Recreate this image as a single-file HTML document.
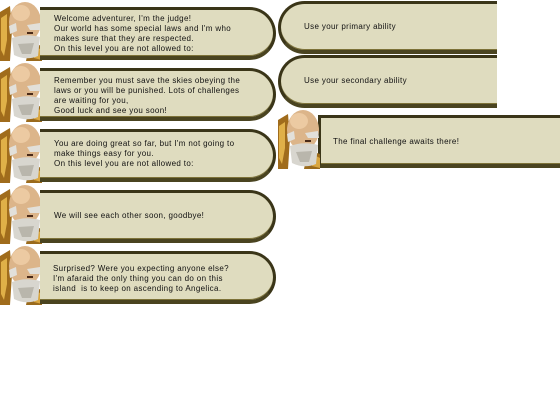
<!DOCTYPE html>
<html><head><meta charset="utf-8"><style>
body{margin:0;width:560px;height:400px;background:#fff;position:relative;overflow:hidden;font-family:"Liberation Sans",sans-serif}
.b{position:absolute;box-sizing:border-box;background:#dfdcbf;border:3px solid #3a3518;border-bottom:4px solid #4a4420;box-shadow:inset 0 -1px 0 #7d7238;color:#111;font-size:8px;line-height:10px;letter-spacing:0.35px}
.l{border-left:none;border-radius:0 27px 27px 0}
.r{border-right:none;border-radius:27px 0 0 27px}
.t{position:absolute}
svg.p{position:absolute;width:42px;height:61px}
</style></head><body>
<svg width="0" height="0" style="position:absolute"><defs>
<g id="pt">
<path d="M0 12 L10 6 L12 30 L10 61 L0 61Z" fill="#a06c1c"/>
<path d="M1 18 L7 14 L7 40 L4 56 L1 50Z" fill="#e0b048"/>
<path d="M30 42 L42 46 L42 61 L26 61Z" fill="#9a6a1c"/>
<path d="M34 46 L42 50 L42 60 L34 58Z" fill="#d9a640"/>
<ellipse cx="25" cy="22" rx="16" ry="20" fill="#dcb58a"/>
<ellipse cx="21" cy="13" rx="9" ry="8" fill="#eccaa2"/>
<path d="M9 26 L16 23 L17 31 L10 34Z" fill="#e2e0da"/>
<path d="M27 25 L40 23 L41 30 L30 30Z" fill="#e2e0da"/>
<path d="M12 38 Q25 33 40 37 L38 56 Q26 61 14 55Z" fill="#d8d6cf"/>
<path d="M18 44 L34 43 L31 54 L22 54Z" fill="#b9b6ac"/>
<rect x="27" y="32" width="6" height="2" fill="#4a2a18"/>
</g></defs></svg>

<svg class="p" style="left:0;top:0"><use href="#pt"/></svg>
<div class="b l" style="left:40px;top:7px;width:236px;height:53px"><div class="t" style="left:14px;top:4px">Welcome adventurer, I'm the judge!<br>Our world has some special laws and I'm who<br>makes sure that they are respected.<br>On this level you are not allowed to:</div></div>

<svg class="p" style="left:0;top:61px"><use href="#pt"/></svg>
<div class="b l" style="left:40px;top:68px;width:236px;height:53px"><div class="t" style="left:14px;top:5px">Remember you must save the skies obeying the<br>laws or you will be punished. Lots of challenges<br>are waiting for you,<br>Good luck and see you soon!</div></div>

<svg class="p" style="left:0;top:122px"><use href="#pt"/></svg>
<div class="b l" style="left:40px;top:129px;width:236px;height:53px"><div class="t" style="left:14px;top:7px">You are doing great so far, but I'm not going to<br>make things easy for you.<br>On this level you are not allowed to:</div></div>

<svg class="p" style="left:0;top:183px"><use href="#pt"/></svg>
<div class="b l" style="left:40px;top:190px;width:236px;height:53px"><div class="t" style="left:14px;top:18px">We will see each other soon, goodbye!</div></div>

<svg class="p" style="left:0;top:244px"><use href="#pt"/></svg>
<div class="b l" style="left:40px;top:251px;width:236px;height:53px"><div class="t" style="left:13px;top:10px">Surprised? Were you expecting anyone else?<br>I'm afaraid the only thing you can do on this<br>island &nbsp;is to keep on ascending to Angelica.</div></div>

<div class="b r" style="left:278px;top:1px;width:219px;height:53px"><div class="t" style="left:23px;top:18px">Use your primary ability</div></div>
<div class="b r" style="left:278px;top:55px;width:219px;height:53px"><div class="t" style="left:23px;top:18px">Use your secondary ability</div></div>

<div class="b" style="left:318px;top:115px;width:242px;height:53px;border-right:none"><div class="t" style="left:12px;top:19px">The final challenge awaits there!</div></div>
<svg class="p" style="left:278px;top:108px"><use href="#pt"/></svg>
</body></html>
